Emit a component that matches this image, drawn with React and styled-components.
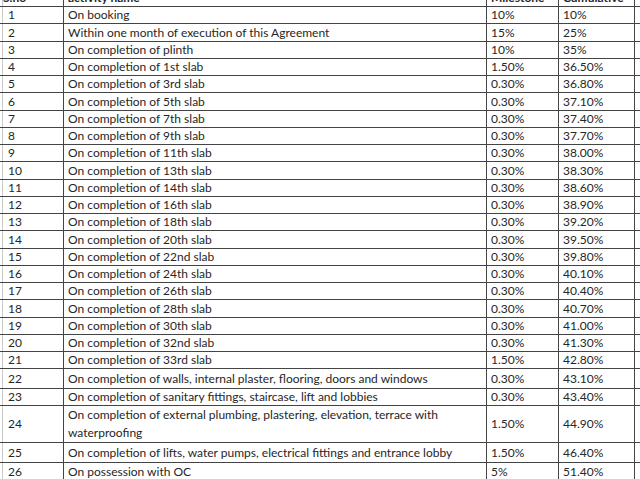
import React from "react";
import styled, { createGlobalStyle } from "styled-components";

const GlobalStyle = createGlobalStyle`
  html, body {
    margin: 0;
    padding: 0;
    background: #fff;
    overflow: hidden;
  }
`;

const rows = [
  ["1", "On booking", "10%", "10%", 17],
  ["2", "Within one month of execution of this Agreement", "15%", "25%", 18],
  ["3", "On completion of plinth", "10%", "35%", 17],
  ["4", "On completion of 1st slab", "1.50%", "36.50%", 17],
  ["5", "On completion of 3rd slab", "0.30%", "36.80%", 17],
  ["6", "On completion of 5th slab", "0.30%", "37.10%", 18],
  ["7", "On completion of 7th slab", "0.30%", "37.40%", 17],
  ["8", "On completion of 9th slab", "0.30%", "37.70%", 17],
  ["9", "On completion of 11th slab", "0.30%", "38.00%", 17],
  ["10", "On completion of 13th slab", "0.30%", "38.30%", 18],
  ["11", "On completion of 14th slab", "0.30%", "38.60%", 17],
  ["12", "On completion of 16th slab", "0.30%", "38.90%", 17],
  ["13", "On completion of 18th slab", "0.30%", "39.20%", 17],
  ["14", "On completion of 20th slab", "0.30%", "39.50%", 18],
  ["15", "On completion of 22nd slab", "0.30%", "39.80%", 17],
  ["16", "On completion of 24th slab", "0.30%", "40.10%", 17],
  ["17", "On completion of 26th slab", "0.30%", "40.40%", 17],
  ["18", "On completion of 28th slab", "0.30%", "40.70%", 18],
  ["19", "On completion of 30th slab", "0.30%", "41.00%", 17],
  ["20", "On completion of 32nd slab", "0.30%", "41.30%", 17],
  ["21", "On completion of 33rd slab", "1.50%", "42.80%", 17],
  ["22", "On completion of walls, internal plaster, flooring, doors and windows", "0.30%", "43.10%", 20],
  ["23", "On completion of sanitary fittings, staircase, lift and lobbies", "0.30%", "43.40%", 17],
  [
    "24",
    <>
      On completion of external plumbing, plastering, elevation, terrace with
      <br />
      waterproofing
    </>,
    "1.50%",
    "44.90%",
    37,
  ],
  ["25", "On completion of lifts, water pumps, electrical fittings and entrance lobby", "1.50%", "46.40%", 20],
  ["26", "On possession with OC", "5%", "51.40%", 19],
];

const App = () => {
  return (
    <Sheet>
      <GlobalStyle />
      <Row h={17}>
        <HeadCell first>S.no</HeadCell>
        <HeadCell>activity name</HeadCell>
        <HeadCell>Milestone</HeadCell>
        <HeadCell>Cumulative</HeadCell>
      </Row>
      {rows.map(([no, name, milestone, cumulative, h]) => (
        <Row key={no} h={h}>
          <Cell first>{no}</Cell>
          <Cell>{name}</Cell>
          <Cell>{milestone}</Cell>
          <Cell>{cumulative}</Cell>
        </Row>
      ))}
    </Sheet>
  );
};

export default App;

const Sheet = styled.div`
  margin-top: -10px;
  width: 640px;
  font-family: Lato, "Liberation Sans", sans-serif;
  font-size: 12px;
  color: #262626;
`;

const Row = styled.div`
  display: grid;
  grid-template-columns: 64px 423px 72px 76px 5px;
  height: ${({ h }) => h}px;
  box-sizing: border-box;
  border-bottom: 1px solid #444;
`;

const Cell = styled.div`
  display: flex;
  align-items: center;
  padding: ${({ first }) => (first ? "0 3px 0 5px" : "0 3px 0 4px")};
  border-right: 1px solid #444;
  border-left: ${({ first }) => (first ? "1px solid #c8c8c8" : "none")};
  margin-left: ${({ first }) => (first ? "2px" : "0")};
  line-height: 18px;
  white-space: nowrap;
  overflow: hidden;
`;

const HeadCell = styled(Cell)`
  font-weight: bold;
  padding-left: ${({ first }) => (first ? "0" : "4px")};
`;
